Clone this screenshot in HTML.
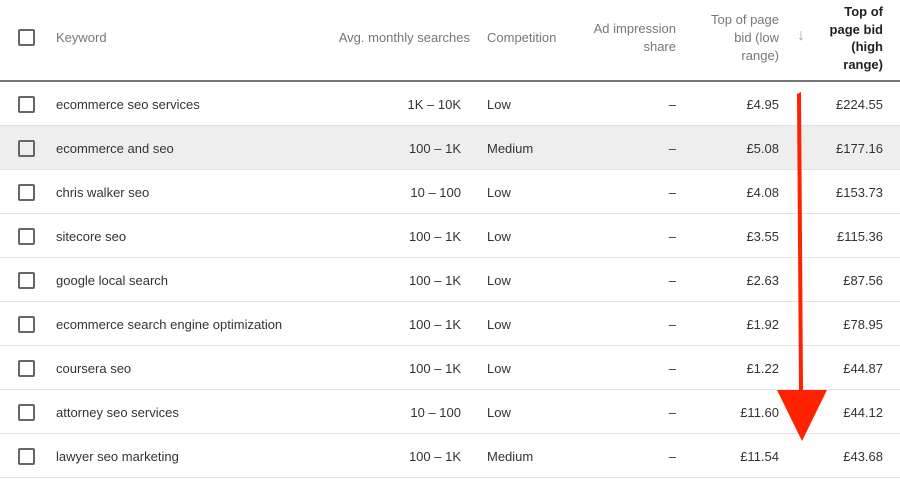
<!DOCTYPE html><html><head><style>
body{margin:0;width:900px;height:482px;background:#fff;font-family:"Liberation Sans",sans-serif;font-size:13px;color:#333;position:relative;overflow:hidden}
.hd{position:absolute;top:0;left:0;width:900px;height:80px;border-bottom:2px solid #777}
.t{position:absolute;white-space:nowrap}
.h{color:#777;line-height:18px}
.r{text-align:right}
.cb{position:absolute;left:18px;width:13px;height:13px;border:2px solid #666;border-radius:2px}
.row{position:absolute;left:0;width:900px;height:43px;border-bottom:1px solid #e3e3e3}
</style></head><body>
<div class="hd"></div>
<div class="cb" style="top:29px"></div>
<div class="t h" style="left:56px;top:29px">Keyword</div>
<div class="t h r" style="right:430px;top:29px">Avg. monthly searches</div>
<div class="t h" style="left:487px;top:29px">Competition</div>
<div class="t h r" style="right:224px;top:20px">Ad impression<br>share</div>
<div class="t h r" style="right:121px;top:11px">Top of page<br>bid (low<br>range)</div>
<div class="t h" style="left:797px;top:27px;color:#aaa;font-size:16px">↓</div>
<div class="t h r" style="right:17px;top:3px;color:#222;font-weight:bold;line-height:17.5px">Top of<br>page bid<br>(high<br>range)</div>
<div id="rows"></div>
<script>
var d=[["ecommerce seo services","1K – 10K","Low","£4.95","£224.55"],["ecommerce and seo","100 – 1K","Medium","£5.08","£177.16"],["chris walker seo","10 – 100","Low","£4.08","£153.73"],["sitecore seo","100 – 1K","Low","£3.55","£115.36"],["google local search","100 – 1K","Low","£2.63","£87.56"],["ecommerce search engine optimization","100 – 1K","Low","£1.92","£78.95"],["coursera seo","100 – 1K","Low","£1.22","£44.87"],["attorney seo services","10 – 100","Low","£11.60","£44.12"],["lawyer seo marketing","100 – 1K","Medium","£11.54","£43.68"]];
var h="";d.forEach(function(r,i){var y=82+i*44;
h+='<div class="row" style="top:'+y+'px;'+(i==1?'background:#eee':'')+'"></div>';
var ty=y+15;
h+='<div class="cb" style="top:'+(y+14)+'px"></div>';
h+='<div class="t" style="left:56px;top:'+ty+'px">'+r[0]+'</div>';
h+='<div class="t r" style="right:439px;top:'+ty+'px">'+r[1]+'</div>';
h+='<div class="t" style="left:487px;top:'+ty+'px">'+r[2]+'</div>';
h+='<div class="t r" style="right:224px;top:'+ty+'px">–</div>';
h+='<div class="t r" style="right:121px;top:'+ty+'px">'+r[3]+'</div>';
h+='<div class="t r" style="right:17px;top:'+ty+'px">'+r[4]+'</div>';});
document.getElementById('rows').innerHTML=h;
</script>
<svg style="position:absolute;left:0;top:0" width="900" height="482"><path d="M797 94 L801 92 L803 390 L827 390 L802 441 L777 390 L799 390 Z" fill="#ff2200"/></svg>
</body></html>
